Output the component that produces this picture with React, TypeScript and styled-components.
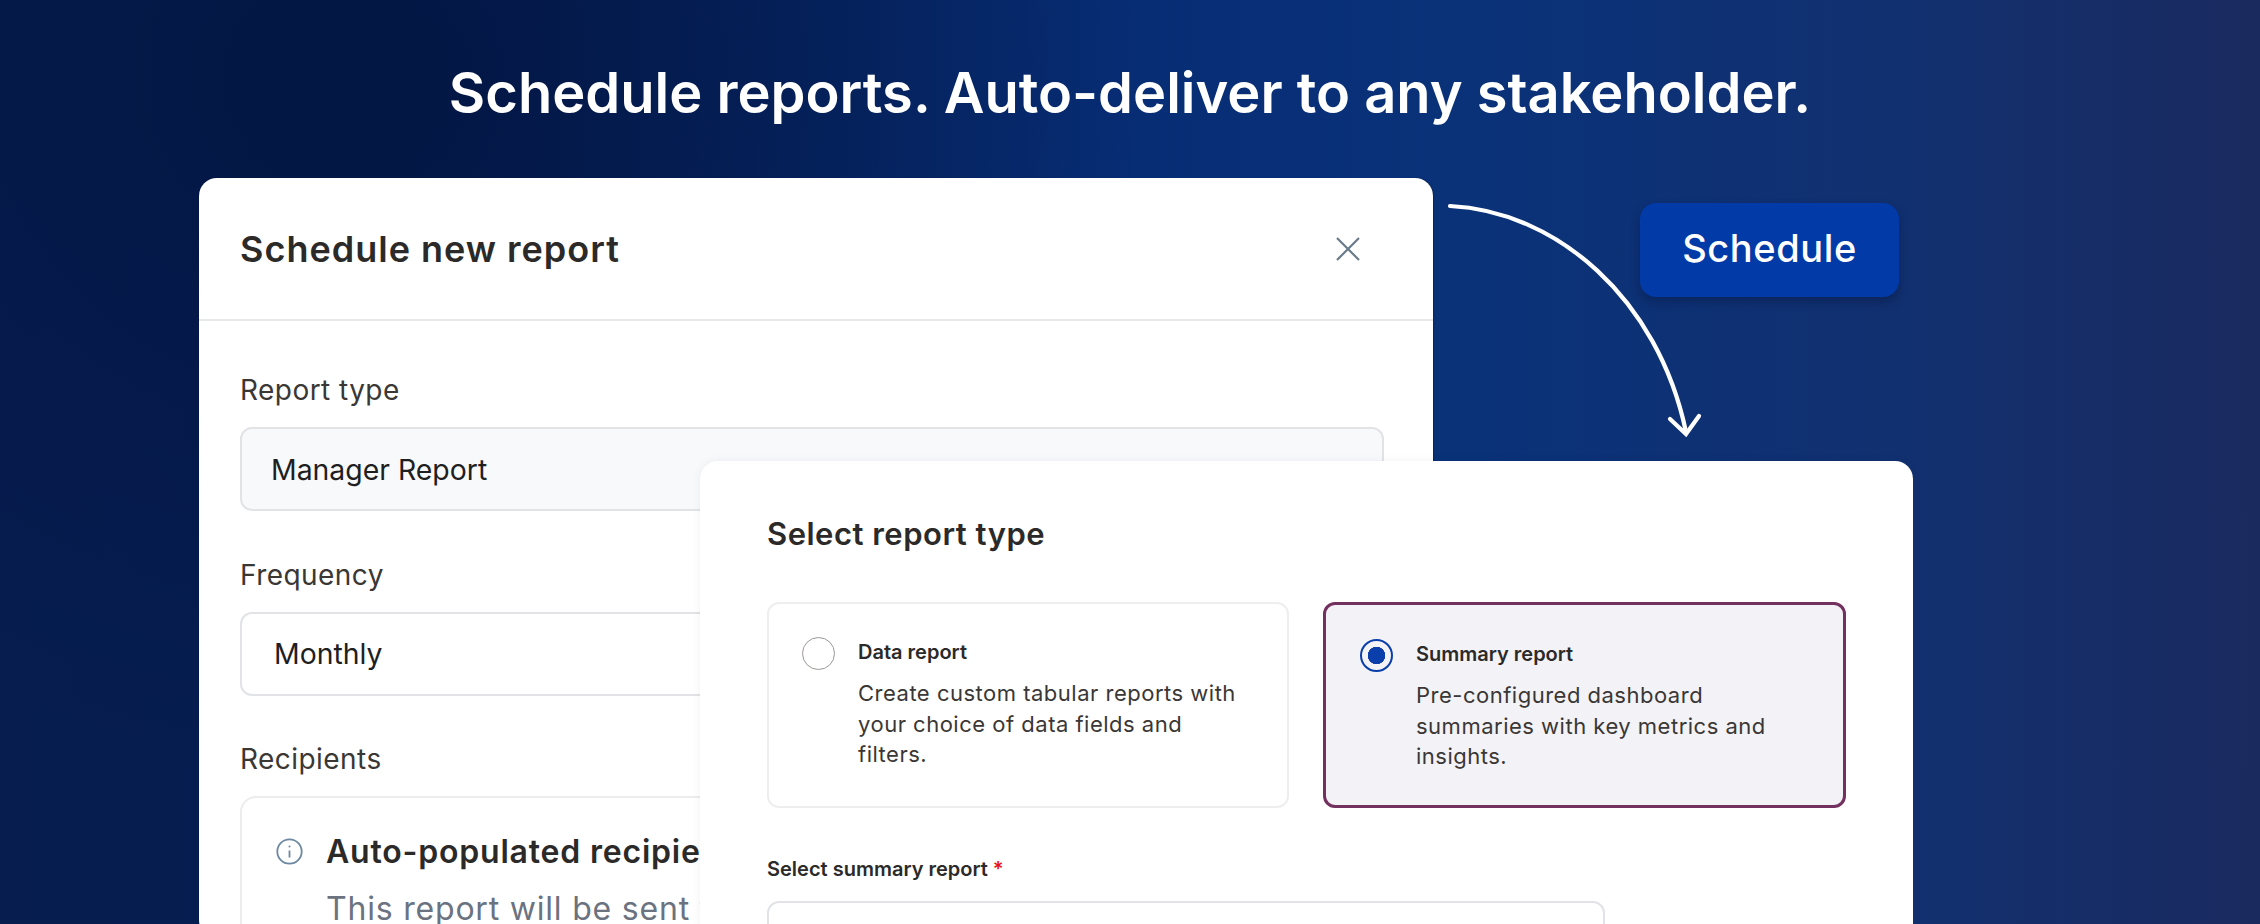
import React from "react";
import styled, { createGlobalStyle } from "styled-components";

const GlobalStyle = createGlobalStyle`
  html, body {
    margin: 0;
    padding: 0;
    height: 100%;
    overflow: hidden;
  }
  body {
    font-family: Inter, "Liberation Sans", sans-serif;
  }
`;

const App = () => {
  return (
    <Page>
      <GlobalStyle />
      <Headline>Schedule reports. Auto-deliver to any stakeholder.</Headline>

      <Stage>
        <ScheduleCard>
          <CardHeader>
            <CardTitle>Schedule new report</CardTitle>
            <CloseIcon viewBox="0 0 24 24">
              <path d="M1 1 L23 23 M23 1 L1 23" />
            </CloseIcon>
          </CardHeader>

          <CardBody>
            <FieldLabel>Report type</FieldLabel>
            <SelectBox $filled>Manager Report</SelectBox>

            <FieldLabel>Frequency</FieldLabel>
            <SelectBox>Monthly</SelectBox>

            <FieldLabel>Recipients</FieldLabel>
            <InfoBox>
              <InfoIcon viewBox="0 0 27 27">
                <circle cx="13.5" cy="13.5" r="12.2" />
                <path d="M13.5 12.5 V19.5" />
                <circle className="dot" cx="13.5" cy="8.5" r="1" />
              </InfoIcon>
              <div>
                <InfoTitle>Auto-populated recipients</InfoTitle>
                <InfoText>This report will be sent to the managers</InfoText>
              </div>
            </InfoBox>
          </CardBody>
        </ScheduleCard>

        <ScheduleButton>Schedule</ScheduleButton>

        <Arrow viewBox="0 0 270 250">
          <path d="M4 4 C 110 9, 212 96, 240 230" />
          <path d="M224 217 L240 232 L253 214" />
        </Arrow>

        <ReportTypeCard>
          <TypeTitle>Select report type</TypeTitle>
          <OptionRow>
            <Option>
              <Radio />
              <div>
                <OptionName>Data report</OptionName>
                <OptionText>
                  Create custom tabular reports with your choice of data fields
                  and filters.
                </OptionText>
              </div>
            </Option>
            <Option $selected>
              <Radio $selected />
              <div>
                <OptionName>Summary report</OptionName>
                <OptionText>
                  Pre-configured dashboard summaries with key metrics and
                  insights.
                </OptionText>
              </div>
            </Option>
          </OptionRow>
          <SmallLabel>
            Select summary report <Required>*</Required>
          </SmallLabel>
          <SummarySelect>Manager Report</SummarySelect>
        </ReportTypeCard>
      </Stage>
    </Page>
  );
};

const Page = styled.main`
  width: 2260px;
  height: 924px;
  overflow: hidden;
  background:
    radial-gradient(ellipse 800px 700px at 350px 80px, rgba(2, 20, 62, 0.7) 0%, rgba(2, 20, 62, 0) 100%),
    linear-gradient(90deg, #071d50 0%, #051d52 20%, #072d75 50%, #0a3279 65%, #12306f 85%, #1a2a5f 100%);
`;

const Headline = styled.h1`
  margin: 0;
  padding-top: 56px;
  height: 126px;
  box-sizing: border-box;
  font-size: 56px;
  line-height: 74px;
  font-weight: 600;
  text-align: center;
  color: #ffffff;
`;

const Stage = styled.div`
  position: relative;
  display: flex;
  align-items: flex-start;
  gap: 207px;
  padding: 52px 0 0 199px;
`;

const ScheduleCard = styled.section`
  width: 1234px;
  height: 760px;
  flex: none;
  background: #ffffff;
  border-radius: 18px;
  box-shadow: 0.5px 0 1px rgba(20, 25, 40, 0.45);
`;

const CardHeader = styled.header`
  display: flex;
  align-items: center;
  justify-content: space-between;
  height: 141px;
  padding: 0 73px 0 41px;
  border-bottom: 2px solid #e7e8ea;
`;

const CardTitle = styled.h2`
  margin: 0;
  font-size: 36px;
  font-weight: 600;
  letter-spacing: 1px;
  color: #2c2a29;
`;

const CloseIcon = styled.svg`
  width: 24px;
  height: 24px;
  fill: none;
  stroke: #6b7c8a;
  stroke-width: 2.2;
`;

const CardBody = styled.div`
  padding: 50px 49px 0 41px;
`;

const FieldLabel = styled.div`
  height: 38px;
  line-height: 38px;
  margin-bottom: 18px;
  font-size: 28px;
  letter-spacing: 0.45px;
  color: #3a3735;
`;

const SelectBox = styled.div<{ $filled?: boolean }>`
  box-sizing: border-box;
  height: 84px;
  margin-bottom: 44.5px;
  padding-left: ${(p) => (p.$filled ? "29px" : "32px")};
  display: flex;
  align-items: center;
  font-size: 28.4px;
  color: #1f1f1f;
  background: ${(p) => (p.$filled ? "#f8f9fb" : "#ffffff")};
  border: 2px solid #e2e3e6;
  border-radius: 12px;
`;

const InfoBox = styled.div`
  display: flex;
  align-items: flex-start;
  gap: 23px;
  box-sizing: border-box;
  height: 200px;
  padding: 35px 34px;
  border: 2px solid #ececef;
  border-radius: 16px;
`;

const InfoIcon = styled.svg`
  width: 27px;
  height: 27px;
  margin-top: 5px;
  flex: none;
  fill: none;
  stroke: #6d88a2;
  stroke-width: 1.8;

  .dot {
    fill: #6d88a2;
    stroke: none;
  }
`;

const InfoTitle = styled.div`
  font-size: 32px;
  line-height: 38px;
  font-weight: 600;
  letter-spacing: 0.8px;
  white-space: nowrap;
  color: #2c2a29;
`;

const InfoText = styled.div`
  margin-top: 19px;
  font-size: 32px;
  line-height: 38px;
  letter-spacing: 0.8px;
  white-space: nowrap;
  color: #6b7280;
`;

const ScheduleButton = styled.button`
  width: 259px;
  height: 94px;
  flex: none;
  margin-top: 25px;
  padding: 0 0 4px;
  border: none;
  border-radius: 16px;
  background: #023aa8;
  box-shadow: 0 5px 10px rgba(5, 20, 60, 0.4);
  font-family: inherit;
  font-size: 38px;
  font-weight: 500;
  letter-spacing: 0.6px;
  color: #ffffff;
`;

const Arrow = styled.svg`
  position: absolute;
  left: 1446px;
  top: 76px;
  width: 270px;
  height: 250px;
  fill: none;
  stroke: #ffffff;
  stroke-width: 4.2;
  stroke-linecap: round;
`;

const ReportTypeCard = styled.section`
  position: absolute;
  left: 700px;
  top: 335px;
  width: 1213px;
  height: 600px;
  box-sizing: border-box;
  padding: 52px 67px 0;
  background: #ffffff;
  border-radius: 18px;
  box-shadow: 0 0 10px rgba(20, 30, 60, 0.06);
`;

const TypeTitle = styled.h3`
  margin: 0 0 47px;
  font-size: 31px;
  line-height: 42px;
  font-weight: 600;
  letter-spacing: 0.5px;
  color: #2c2a29;
`;

const OptionRow = styled.div`
  display: flex;
  gap: 34px;
`;

const Option = styled.div<{ $selected?: boolean }>`
  box-sizing: border-box;
  width: ${(p) => (p.$selected ? "523px" : "522px")};
  height: 206px;
  display: flex;
  gap: 23px;
  padding: ${(p) => (p.$selected ? "34px 30px 0 34px" : "33px 40px 0 33px")};
  background: ${(p) => (p.$selected ? "#f3f2f7" : "#ffffff")};
  border: ${(p) => (p.$selected ? "3px solid #73315f" : "2px solid #eeeef0")};
  border-radius: 12px;
`;

const Radio = styled.span<{ $selected?: boolean }>`
  box-sizing: border-box;
  flex: none;
  width: 33px;
  height: 33px;
  border-radius: 50%;
  border: ${(p) => (p.$selected ? "2px solid #0a3eaa" : "1.5px solid #9b9795")};
  background: ${(p) =>
    p.$selected
      ? "radial-gradient(circle, #0a3eaa 0 8.5px, transparent 9px)"
      : "transparent"};
`;

const OptionName = styled.div`
  font-size: 20px;
  line-height: 30px;
  font-weight: 600;
  color: #2c2a29;
`;

const OptionText = styled.p`
  margin: 11px 0 0;
  font-size: 22px;
  line-height: 30.7px;
  letter-spacing: 0.5px;
  color: #3a3735;
`;

const SmallLabel = styled.div`
  margin-top: 47px;
  font-size: 20px;
  line-height: 28px;
  font-weight: 600;
  color: #2c2a29;
`;

const Required = styled.span`
  color: #e5141a;
`;

const SummarySelect = styled.div`
  box-sizing: border-box;
  width: 838px;
  height: 84px;
  margin-top: 18px;
  padding: 16px 24px;
  font-size: 21px;
  line-height: 28px;
  color: #7b7f86;
  border: 2px solid #e2e3e6;
  border-radius: 12px;
`;

export default App;
